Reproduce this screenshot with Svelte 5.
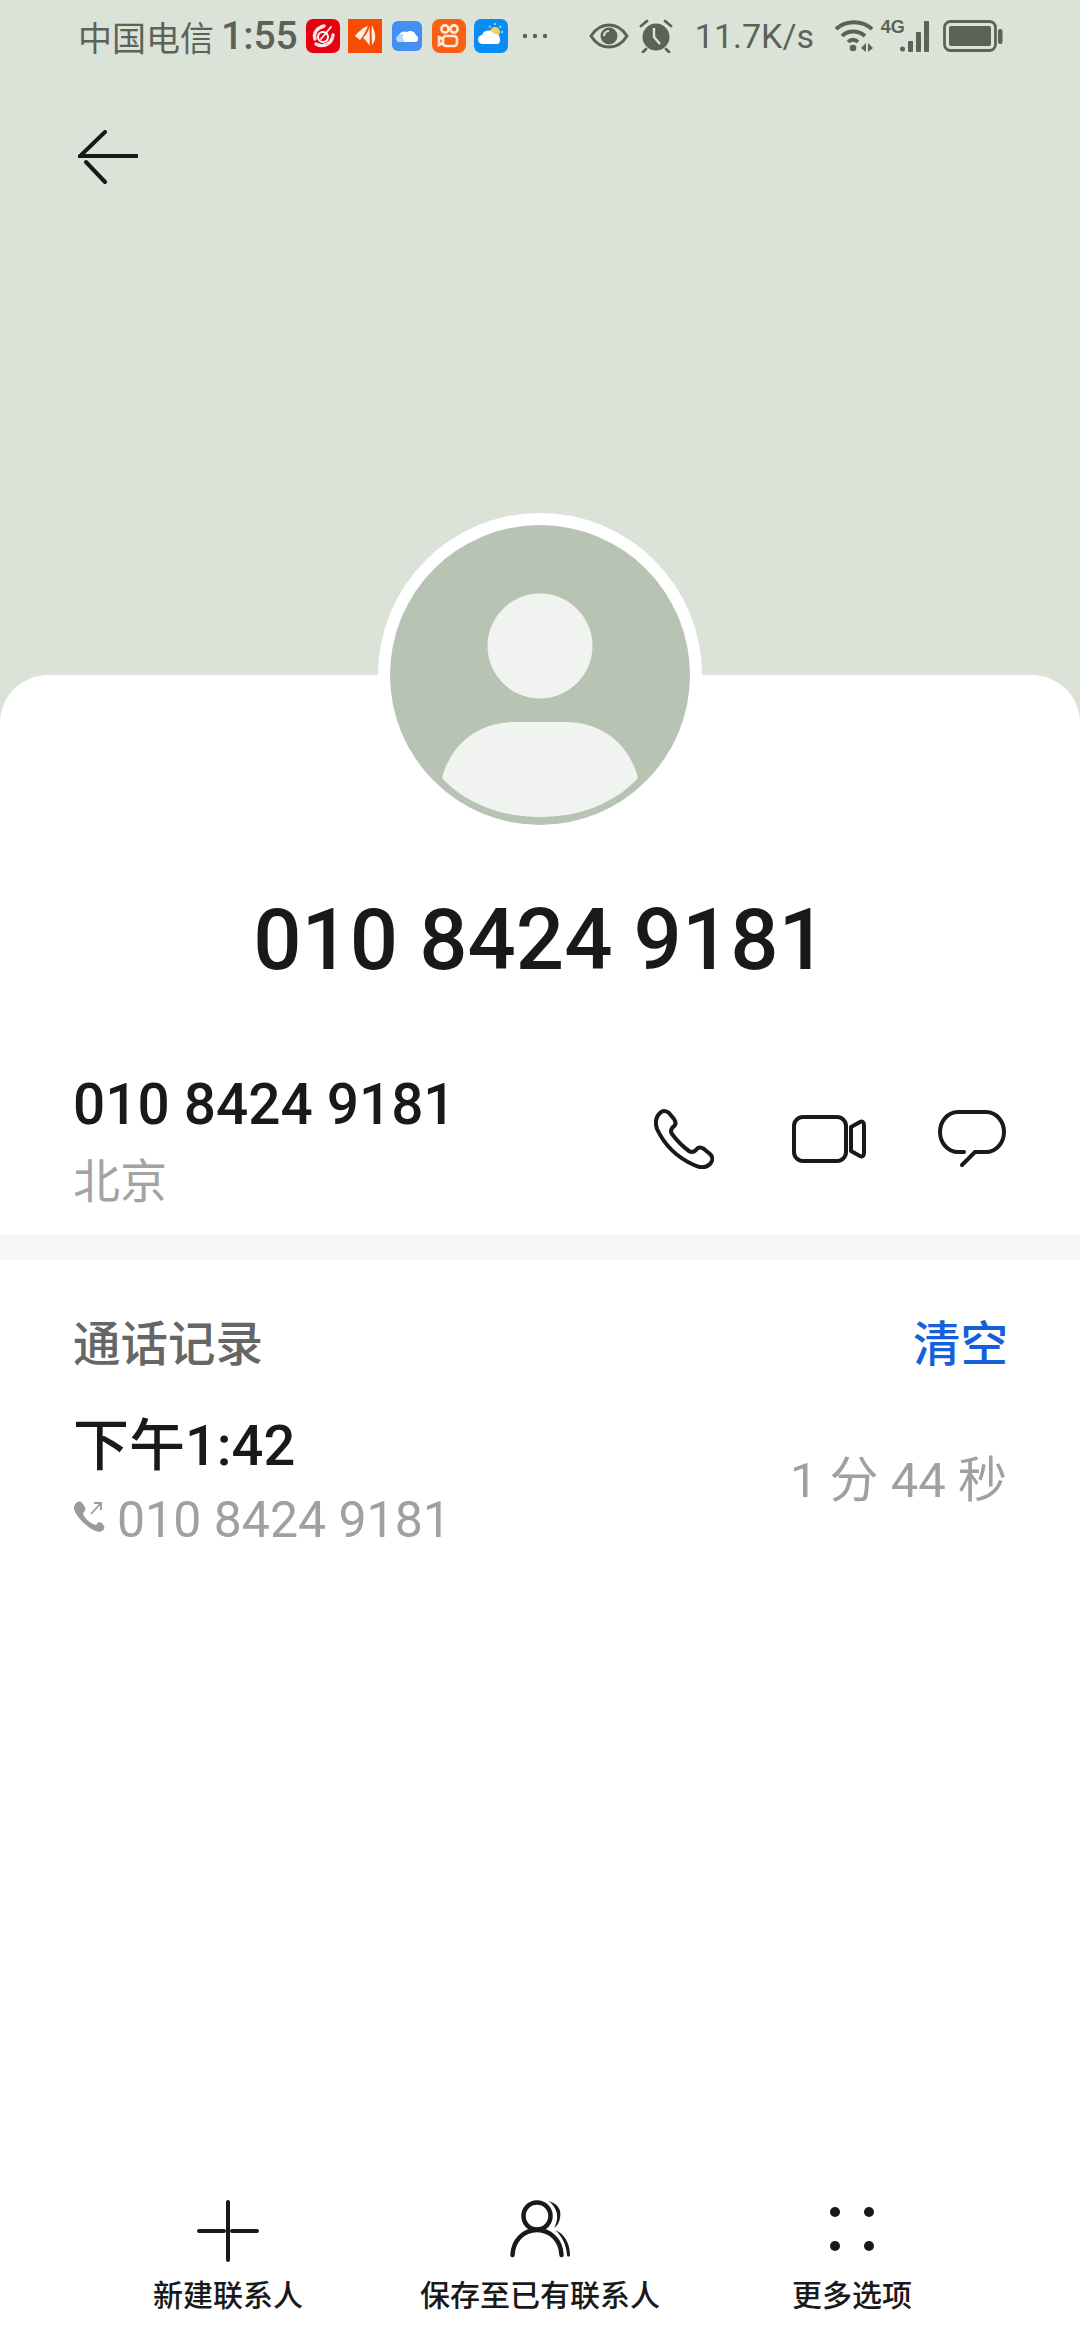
<script>
    const actions = [
        { label: '新建联系人', kind: 'plus' },
        { label: '保存至已有联系人', kind: 'person' },
        { label: '更多选项', kind: 'more' }
    ]
</script>

<div class="page">
    <header class="top">
        <div class="status">
            <span class="carrier">中国电信</span>
            <span class="clock">1:55</span>
            <div class="notes">
                <svg class="app" viewBox="0 0 34 34"><rect width="34" height="34" rx="7" fill="#e60012"/><g fill="none" stroke-linecap="round"><path d="M9 20C7 14 11 9 18 7" stroke="#fde3e3" stroke-width="3.400"/><path d="M10 25C17 29 26 25 27 16" stroke="#fde3e3" stroke-width="3.400"/><circle cx="17" cy="18" r="5" stroke="#fff" stroke-width="2"/><path d="M15 20 25 8" stroke="#fff" stroke-width="1.800"/></g></svg>
                <svg class="app" viewBox="0 0 34 34"><rect width="34" height="34" fill="#f84c04"/><path d="M7 17C11 12 16 8 20 7 18 11 16 16 12 21ZM21.500 7C21 12 18 16 15 19 18 21 20 24 21.500 27 22 20 21.500 13 21.500 7ZM24 6C26 11 28 16 27 20 26.500 23 25 25 24 26 24 19 23 12 24 6Z" fill="#fff1e6"/></svg>
                <svg class="app cloudy" viewBox="0 0 30 30"><rect width="30" height="30" rx="6" fill="#4390f2"/><path d="M6 21A4 4 0 0 1 7 14 6 6 0 0 1 15 11 6 6 0 0 1 24 14 4 4 0 0 1 24 21Z" fill="#fff"/><path d="M6 21A4 4 0 0 1 7 14 5 5 0 0 1 11 13C10 16 11 19 13 21Z" fill="#b8d6fb"/></svg>
                <svg class="app" viewBox="0 0 34 34"><rect width="34" height="34" rx="8" fill="#fa5f14"/><g fill="none" stroke="#ffe9d8" stroke-width="2.600"><circle cx="13" cy="10" r="3.600"/><circle cx="22" cy="10" r="3.600"/><rect x="11" y="17" width="14" height="10" rx="3"/><path d="M11 20 7 18V26L11 24"/></g></svg>
                <svg class="app" viewBox="0 0 34 34"><rect width="34" height="34" rx="7" fill="#0a8cf5"/><circle cx="21" cy="13" r="5" fill="#f8cf5c"/><path d="M21 4V6M29 13H27M27 7 25.500 8.500M15 7 16.500 8.500" stroke="#cde6fb" stroke-width="1.400"/><path d="M9 25A4.500 4.500 0 0 1 8 16 6.500 6.500 0 0 1 20 15 5 5 0 0 1 26 20 5 5 0 0 1 24 25Z" fill="#fff"/></svg>
                <svg class="dots" viewBox="0 0 26 6"><circle cx="3" cy="3" r="2.200"/><circle cx="13" cy="3" r="2.200"/><circle cx="23" cy="3" r="2.200"/></svg>
            </div>
            <div class="sys">
                <svg class="eye" viewBox="0 0 40 26"><path d="M2 13C7 5 13 2 20 2S33 5 38 13C33 21 27 24 20 24S7 21 2 13Z" fill="none" stroke="#5d6259" stroke-width="3"/><circle cx="20" cy="13" r="8.500" fill="#5d6259"/><path d="M20 8A5 5 0 0 0 15 13" fill="none" stroke="#dbe3d8" stroke-width="2.200"/></svg>
                <svg class="alarm" viewBox="0 0 34 34"><circle cx="17" cy="18" r="13.500" fill="#5d6259"/><path d="M2 7 8 2M32 7 26 2M7 30 4 33M27 30 30 33" stroke="#5d6259" stroke-width="2.800" stroke-linecap="round"/><path d="M15 9V18L21 25" fill="none" stroke="#dbe3d8" stroke-width="2.400"/></svg>
                <span class="speed">11.7K/s</span>
                <svg class="wifi" viewBox="0 0 38 34"><g fill="none" stroke="#5d6259" stroke-width="3.800"><path d="M1 10C11 1 27 1 37 10"/><path d="M7 17C13 11 23 11 30 17"/><path d="M13 23C16 20 20 20 23 23"/></g><circle cx="18" cy="29" r="3.300" fill="#5d6259"/><path d="M31 24V33L26 29ZM33 24V33L38 29Z" fill="#5d6259"/></svg>
                <div class="cell">
                    <span class="g4">4G</span>
                    <svg class="bars" viewBox="0 0 33 32" fill="#5d6259"><circle cx="2.500" cy="29" r="2.500"/><rect x="8" y="21" width="5" height="11" rx="1"/><rect x="16" y="12" width="5" height="20" rx="1"/><rect x="24" y="1" width="5" height="31" rx="1"/></svg>
                </div>
                <svg class="battery" viewBox="0 0 60 32"><rect x="1.500" y="1.500" width="51" height="29" rx="6" fill="none" stroke="#5d6259" stroke-width="2.800"/><rect x="6" y="6" width="42" height="20" rx="2" fill="#5d6259"/><rect x="55" y="9" width="4.500" height="15" rx="2" fill="#5d6259"/></svg>
            </div>
        </div>
        <button class="back" aria-label="返回">
            <svg viewBox="0 0 60 54" fill="none" stroke="#191919" stroke-width="4" stroke-linecap="round"><path d="M59 26H2L27 2"/><path d="M8 32 27 52"/></svg>
        </button>
    </header>

    <main class="card">
        <div class="avatar">
            <svg viewBox="0 0 300 300">
                <circle cx="150" cy="150" r="150" fill="#b7c3b3"/>
                <circle cx="150" cy="121" r="52.500" fill="#f0f3ef"/>
                <path d="M52 253C60 222 85 197 125 197H175C215 197 240 222 248 253 225 278 190 292 150 292S75 278 52 253Z" fill="#f0f3ef"/>
            </svg>
        </div>
        <h1>010 8424 9181</h1>

        <section class="contact">
            <div class="who">
                <div class="number">010 8424 9181</div>
                <div class="place">北京</div>
            </div>
            <div class="ways">
                <svg class="phone" viewBox="0 0 60 60" fill="none" stroke="#191919" stroke-width="4" stroke-linejoin="round"><path d="M6 4C9 1 13 2 15 4L20 10C22 13 22 16 19 18 17 20 16 22 18 25 24 33 28 37 35 42 38 44 40 43 42 41 44 38 47 38 50 40L56 45C59 48 59 52 56 55 52 59 46 59 40 56 22 48 11 37 3 20 1 14 2 8 6 4Z"/></svg>
                <svg class="video" viewBox="0 0 74 48" fill="none" stroke="#191919" stroke-width="4" stroke-linejoin="round"><rect x="2" y="2" width="52" height="44" rx="9"/><path d="M59 12 68 7C70 6 72 7 72 10V38C72 41 70 42 68 41L59 36Z"/></svg>
                <svg class="bubble" viewBox="0 0 68 58" fill="none" stroke="#191919" stroke-width="4" stroke-linecap="round"><path d="M26 42H20C10 42 2 33 2 22S10 2 20 2H48C58 2 66 11 66 22S58 42 48 42H37L24 55"/></svg>
            </div>
        </section>

        <div class="rule"></div>

        <section class="log">
            <div class="log-head">
                <span class="log-title">通话记录</span>
                <span class="clear">清空</span>
            </div>
            <div class="call">
                <div>
                    <div class="when">下午1:42</div>
                    <div class="sub">
                        <svg class="mini" viewBox="0 0 32 32"><path d="M3 3C5 1 8 1 9 3L12 7C13 9 12 11 11 12 10 13 10 14 11 16 14 20 16 22 20 24 22 25 23 25 24 24 25 22 27 22 29 23L31 26C32 28 31 30 29 31 26 33 20 31 13 25 6 19 1 12 1 8 1 6 2 4 3 3Z" fill="#9b9b9b"/><path d="M18 14 27 4M21 3H28V10" fill="none" stroke="#9b9b9b" stroke-width="1.800"/></svg>
                        <span>010 8424 9181</span>
                    </div>
                </div>
                <div class="length">1 分 44 秒</div>
            </div>
        </section>

        <nav class="actions">
            {#each actions as a}
                <div class="action">
                    {#if a.kind === 'plus'}
                        <svg viewBox="0 0 62 62" stroke="#191919" stroke-width="4" stroke-linecap="round" fill="none"><path d="M31 2V60M2 31H27M35 31H60"/></svg>
                    {:else if a.kind === 'person'}
                        <svg viewBox="0 0 62 62" stroke="#191919" fill="none" stroke-linecap="round">
                            <circle cx="28" cy="16" r="13.500" stroke-width="4.500"/>
                            <path d="M3.500 55C4 41 14 30 28 30S52 41 52.500 55" stroke-width="4.500"/>
                            <path d="M39 1C48 3 53 9 51 18 50 23 48 26 45 28 48 23 49 17 47.500 12 46 7 43 3 39 1Z" fill="#191919" stroke="none"/>
                            <path d="M46 30C54 33 61 42 61 55 61 57 58 57 58 55 57 44 53 36 46 30Z" fill="#191919" stroke="none"/>
                        </svg>
                    {:else}
                        <svg viewBox="0 0 62 62" fill="#191919"><circle cx="14" cy="12" r="5"/><circle cx="48" cy="12" r="5"/><circle cx="14" cy="46" r="5"/><circle cx="48" cy="46" r="5"/></svg>
                    {/if}
                    <span>{a.label}</span>
                </div>
            {/each}
        </nav>
    </main>
</div>

<style>
    :global(body) {
        margin: 0;
        background: #fff;
    }
    .page {
        width: 1080px;
        height: 2340px;
        display: flex;
        flex-direction: column;
        background: #dbe3d8;
        font-family: Roboto, "Noto Sans CJK SC", sans-serif;
        overflow: hidden;
    }
    .top {
        height: 675px;
        flex: none;
        box-sizing: border-box;
        padding: 0 78px;
    }
    .status {
        height: 72px;
        display: flex;
        align-items: center;
        margin-right: -78px;
        color: #5d6259;
    }
    .carrier {
        font-size: 34px;
    }
    .clock {
        margin-left: 7px;
        font-size: 39px;
        font-weight: 500;
    }
    .notes {
        display: flex;
        align-items: center;
        gap: 8px;
        margin-left: 8px;
    }
    .app {
        width: 34px;
        height: 34px;
    }
    .cloudy {
        width: 30px;
        height: 30px;
        margin: 0 2px;
    }
    .dots {
        width: 26px;
        height: 6px;
        margin-left: 6px;
        fill: #5d6259;
    }
    .sys {
        display: flex;
        align-items: center;
        margin-left: 41px;
    }
    .eye {
        width: 40px;
        height: 26px;
    }
    .alarm {
        width: 34px;
        height: 34px;
        margin-left: 10px;
    }
    .speed {
        font-size: 34px;
        margin-left: 22px;
        width: 140px;
    }
    .wifi {
        width: 38px;
        height: 34px;
    }
    .cell {
        display: flex;
        align-items: flex-end;
        margin-left: 8px;
        height: 32px;
        position: relative;
        width: 52px;
    }
    .g4 {
        position: absolute;
        left: 0;
        top: -3px;
        font-family: "Liberation Sans Narrow", "Liberation Sans", sans-serif;
        font-size: 18px;
        font-weight: 700;
    }
    .bars {
        width: 33px;
        height: 32px;
        margin-left: 19px;
    }
    .battery {
        width: 60px;
        height: 32px;
        margin-left: 10px;
    }
    .back {
        display: block;
        margin: 58px 0 0;
        padding: 0;
        border: 0;
        background: none;
        width: 60px;
        height: 54px;
    }
    .back svg {
        display: block;
        width: 60px;
        height: 54px;
    }
    .card {
        flex: 1;
        display: flex;
        flex-direction: column;
        background: #fff;
        border-radius: 48px 48px 0 0;
        position: relative;
    }
    .avatar {
        position: absolute;
        left: 378px;
        top: -162px;
        box-sizing: border-box;
        width: 324px;
        height: 324px;
        padding: 12px;
        border-radius: 50%;
        background: #fff;
    }
    .avatar svg {
        display: block;
        width: 300px;
        height: 300px;
    }
    h1 {
        margin: 215px 0 0;
        height: 100px;
        line-height: 100px;
        text-align: center;
        font-size: 85px;
        font-weight: 500;
        color: #191919;
    }
    .contact {
        display: flex;
        justify-content: space-between;
        align-items: center;
        margin-top: 71px;
        padding: 0 74px 0 73px;
        height: 160px;
    }
    .number {
        font-size: 56.7px;
        font-weight: 500;
        line-height: 70px;
        color: #191919;
    }
    .place {
        margin-top: 12px;
        font-size: 47px;
        line-height: 60px;
        color: #a3a3a3;
    }
    .ways {
        display: flex;
        align-items: center;
        margin-top: -4px;
    }
    .phone {
        width: 60px;
        height: 60px;
    }
    .video {
        width: 74px;
        height: 48px;
        margin-left: 78px;
    }
    .bubble {
        width: 68px;
        height: 58px;
        margin-left: 72px;
    }
    .rule {
        height: 25px;
        margin-top: 14px;
        background: #f7f7f7;
    }
    .log {
        padding: 0 74px 0 73px;
    }
    .log-head {
        display: flex;
        justify-content: space-between;
        align-items: center;
        margin-top: 48px;
        height: 64px;
        font-size: 47.5px;
    }
    .log-title {
        color: #666;
        font-weight: 500;
    }
    .clear {
        margin-right: -2px;
        color: #1660dc;
        font-weight: 500;
    }
    .call {
        display: flex;
        justify-content: space-between;
        align-items: center;
        margin-top: 38px;
    }
    .when {
        font-size: 56px;
        line-height: 72px;
        font-weight: 500;
        color: #191919;
    }
    .sub {
        display: flex;
        align-items: center;
        margin-top: 5px;
        font-size: 50px;
        line-height: 66px;
        color: #a0a0a0;
    }
    .mini {
        width: 32px;
        height: 32px;
        margin-right: 12px;
        margin-bottom: 8px;
    }
    .length {
        margin: 0 -1px 12px 0;
        font-size: 49px;
        color: #a0a0a0;
    }
    .actions {
        margin-top: auto;
        margin-bottom: 22px;
        display: flex;
        justify-content: center;
    }
    .action {
        width: 312px;
        display: flex;
        flex-direction: column;
        align-items: center;
        color: #191919;
        font-size: 30px;
        font-weight: 500;
    }
    .action svg {
        width: 62px;
        height: 62px;
    }
    .action span {
        margin-top: 12px;
        line-height: 44px;
    }
</style>
